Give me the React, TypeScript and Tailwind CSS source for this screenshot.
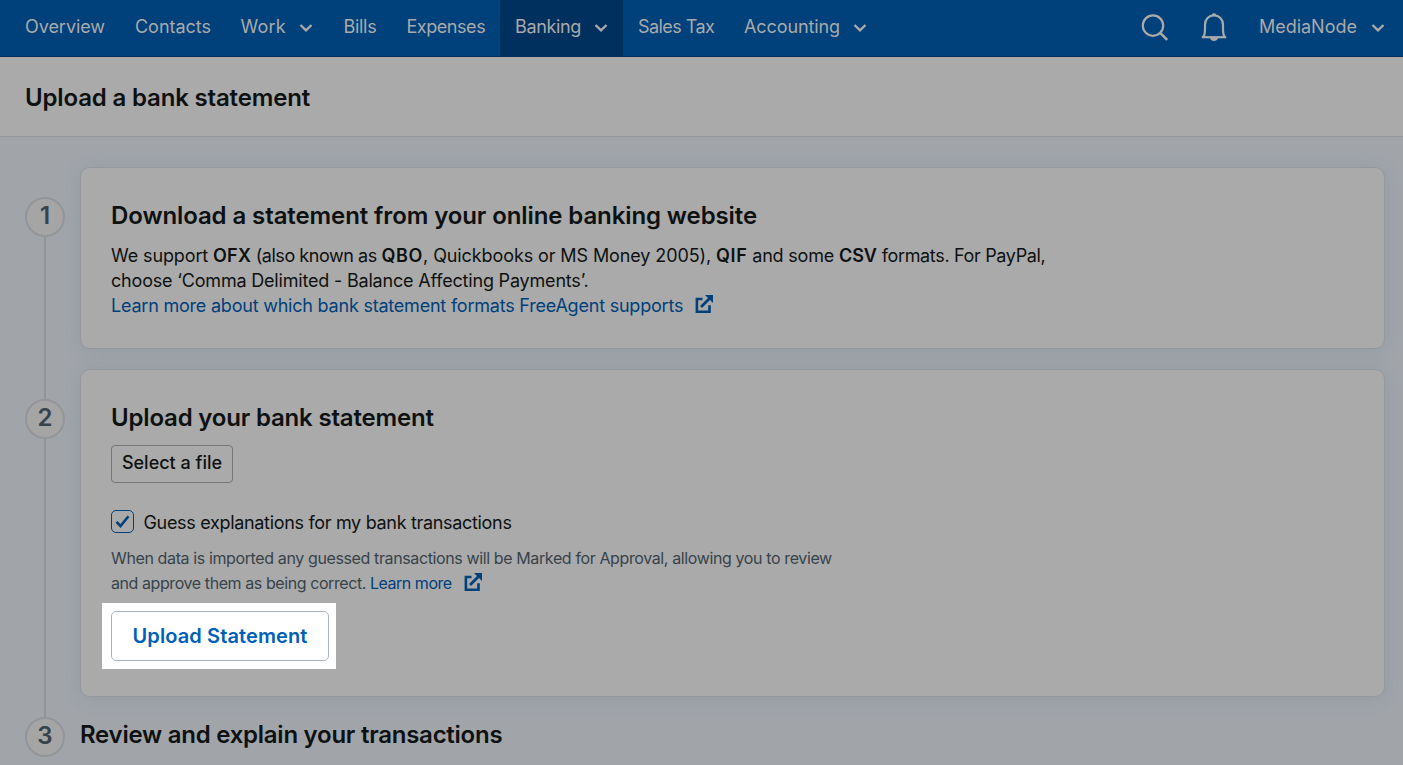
import type { ReactNode } from "react";
import clsx from "clsx";

function Chevron() {
  return (
    <svg width="14" height="10" viewBox="0 0 14 10" fill="none" stroke="currentColor" strokeWidth="2.4" className="mt-[3px] shrink-0">
      <path d="M1.500 2 7 7.300 12.500 2" />
    </svg>
  );
}

function SearchIcon() {
  return (
    <svg width="30" height="30" viewBox="0 0 30 30" fill="none" stroke="currentColor" strokeWidth="2.2">
      <circle cx="13" cy="13.6" r="10.2" />
      <path d="m20.2 20.8 7 7" strokeWidth="2.6" />
    </svg>
  );
}

function BellIcon() {
  return (
    <svg width="28" height="30" viewBox="0 0 28 30" fill="none" stroke="currentColor" strokeWidth="2.2">
      <path d="M3.200 25C4.800 23 5 20.500 5 17v-4.200C5 7.200 8.800 3.400 14 3.400s9 3.800 9 9.400V17c0 3.500.2 6 1.800 8" />
      <path d="M1.800 25.200h24.400" />
      <path d="M11.600 3.600a2.400 2.400 0 0 1 4.800 0ZM10 26h8c-.5 2-2 2.900-4 2.900S10.500 28 10 26Z" fill="currentColor" stroke="none" />
    </svg>
  );
}

function ExternalIcon({ className }: { className: string }) {
  return (
    <svg width="18" height="18" viewBox="0 0 18 18" fill="none" stroke="currentColor" strokeWidth="2.6" className={clsx("inline-block", className)}>
      <path d="M7.500 4H1.900v12.700h12.600V10.200" />
      <path d="m6 12 8.500-8.500" strokeWidth="2.900" />
      <path d="M10 .1H18V8Z" fill="currentColor" stroke="none" />
    </svg>
  );
}

type NavItem = { label: string; className: string; menu?: boolean; active?: boolean };

const nav: NavItem[] = [
  { label: "Overview", className: "w-[110px] tracking-[-0.05px]" },
  { label: "Contacts", className: "w-[105.5px] tracking-[-0.03px]" },
  { label: "Work", className: "w-[103px] tracking-[0.2px]", menu: true },
  { label: "Bills", className: "w-[63px] tracking-[-0.3px]" },
  { label: "Expenses", className: "w-[108.5px] tracking-[-0.45px]" },
  { label: "Banking", className: "w-[123px] tracking-[-0.35px]", menu: true, active: true },
  { label: "Sales Tax", className: "w-[106px] tracking-[-0.55px]" },
  { label: "Accounting", className: "w-[154px] tracking-[-0.1px]", menu: true },
];

function Header() {
  return (
    <header className="flex h-[57px] items-stretch border-b border-[#002d5c] bg-[#00407b] pl-[10px] text-[18px] text-[#aaaaaa]">
      <nav className="flex">
        {nav.map((item) => (
          <a
            key={item.label}
            className={clsx("flex shrink-0 items-center pb-[3px] pl-[15px] whitespace-nowrap", item.className, item.active && "bg-[#00305d]")}
          >
            {item.label}
            {item.menu && (
              <span className="ml-[13.5px]">
                <Chevron />
              </span>
            )}
          </a>
        ))}
      </nav>
      <div className="ml-auto flex items-center pr-[18px]">
        <span className="mr-[30px] pb-[2px]"><SearchIcon /></span>
        <span className="mr-[31px] pb-[2px]"><BellIcon /></span>
        <span className="mr-[14px] pb-[3px]">MediaNode</span>
        <span className="pb-[3px]"><Chevron /></span>
      </div>
    </header>
  );
}

function Step({ n, first, last, children }: { n: number; first?: boolean; last?: boolean; children: ReactNode }) {
  return (
    <section className="flex gap-[15px] pr-[18px] pl-[25px]">
      <div className="flex w-10 shrink-0 flex-col items-center">
        {!last && <div className={clsx("h-[30px] w-[2px]", !first && "bg-[#929497]")} />}
        <div className="flex size-10 shrink-0 items-center justify-center rounded-full border-2 border-[#939598] bg-[#a5a5a5] pb-[3px] text-2xl font-semibold text-[#37434b]">
          {n}
        </div>
        {!last && <div className="w-[2px] grow bg-[#929497]" />}
      </div>
      <div className={clsx("min-w-0 grow", !last && "pb-5")}>{children}</div>
    </section>
  );
}

function Card({ className, children }: { className: string; children: ReactNode }) {
  return (
    <div className={clsx("rounded-[10px] border border-[#95999d] bg-[#aaaaaa] px-[30px] pt-[33px] shadow-[0_2px_20px_rgba(50,70,120,0.11)]", className)}>
      {children}
    </div>
  );
}

function Heading({ className, children }: { className: string; children: ReactNode }) {
  return <h2 className={clsx("text-[24px] leading-[30px] font-semibold whitespace-nowrap text-[#0e1111]", className)}>{children}</h2>;
}

export default function App() {
  return (
    <div className="flex h-screen flex-col overflow-hidden bg-[#a1a5aa] font-['Inter',sans-serif] text-[#0e1111]">
      <Header />
      <div className="h-20 shrink-0 border-b border-[#939598] bg-[#aaaaaa] pt-[26px] pl-[25px]">
        <Heading className="tracking-[-0.16px]">Upload a bank statement</Heading>
      </div>

      <main className="pt-[30px]">
        <Step n={1} first>
          <Card className="h-[182px]">
            <Heading className="tracking-[-0.1px]">Download a statement from your online banking website</Heading>
            <p className="mt-3 text-[18px] leading-[25px] whitespace-nowrap">
              <span className="tracking-[-0.12px]">We support </span>
              <b className="font-semibold tracking-[0.2px]">OFX</b>
              <span className="tracking-[-0.45px]"> (also known as </span>
              <b className="font-semibold tracking-[0.7px]">QBO</b>
              <span className="tracking-[-0.1px]">, Quickbooks or MS Money 2005), </span>
              <b className="font-semibold tracking-[0.6px]">QIF</b>
              <span className="tracking-[-0.2px]"> and some </span>
              <b className="font-semibold">CSV</b>
              <span className="tracking-[-0.34px]"> formats. For PayPal,</span>
              <br />
              <span className="tracking-[-0.19px]">choose ‘Comma Delimited - Balance Affecting Payments’.</span>
              <br />
              <a className="text-[#00407b]">
                <span className="tracking-[-0.215px]">Learn more about which bank statement formats FreeAgent supports</span>
                <ExternalIcon className="ml-3 align-[-1px]" />
              </a>
            </p>
          </Card>
        </Step>

        <Step n={2}>
          <Card className="h-[328px]">
            <Heading className="tracking-[-0.18px]">Upload your bank statement</Heading>
            <button className="mt-3 flex h-[38px] w-[122px] items-center justify-center rounded-[4px] border border-[#73787b] pb-[3px] text-[18px] font-medium whitespace-nowrap">
              Select a file
            </button>
            <label className="mt-[27px] flex h-[25px] items-start text-[18px] leading-[25px]">
              <span className="flex size-[23px] shrink-0 items-center justify-center rounded-[5px] border border-[#00407b] text-[#00407b]">
                <svg width="15" height="13" viewBox="0 0 15 13" fill="none" stroke="currentColor" strokeWidth="2.6">
                  <path d="m1.500 6.800 4 4.200 8-9.800" />
                </svg>
              </span>
              <span className="ml-[9.5px] tracking-[-0.32px] whitespace-nowrap">Guess explanations for my bank transactions</span>
            </label>
            <p className="mt-[11px] text-[16px] leading-[25px] whitespace-nowrap text-[#37434b]">
              <span className="tracking-[-0.38px]">When data is imported any guessed transactions will be Marked for Approval, allowing you to review</span>
              <br />
              <span className="tracking-[-0.42px]">and approve them as being correct. </span>
              <a className="text-[#00407b]">
                <span className="tracking-[-0.48px]">Learn more</span>
                <ExternalIcon className="ml-3 align-[-2px]" />
              </a>
            </p>
            <div className="mt-[7px] -ml-[9px] h-[66px] w-[234px] bg-white py-2 pr-[7px] pl-[9px]">
              <button className="flex size-full items-center justify-center rounded-[5px] border border-[#a9b4ba] bg-white text-[20px] font-semibold tracking-[0.1px] whitespace-nowrap text-[#0060b9]">
                Upload Statement
              </button>
            </div>
          </Card>
        </Step>

        <Step n={3} last>
          <Heading className="pt-[3px] tracking-[-0.25px]">Review and explain your transactions</Heading>
        </Step>
      </main>
    </div>
  );
}
